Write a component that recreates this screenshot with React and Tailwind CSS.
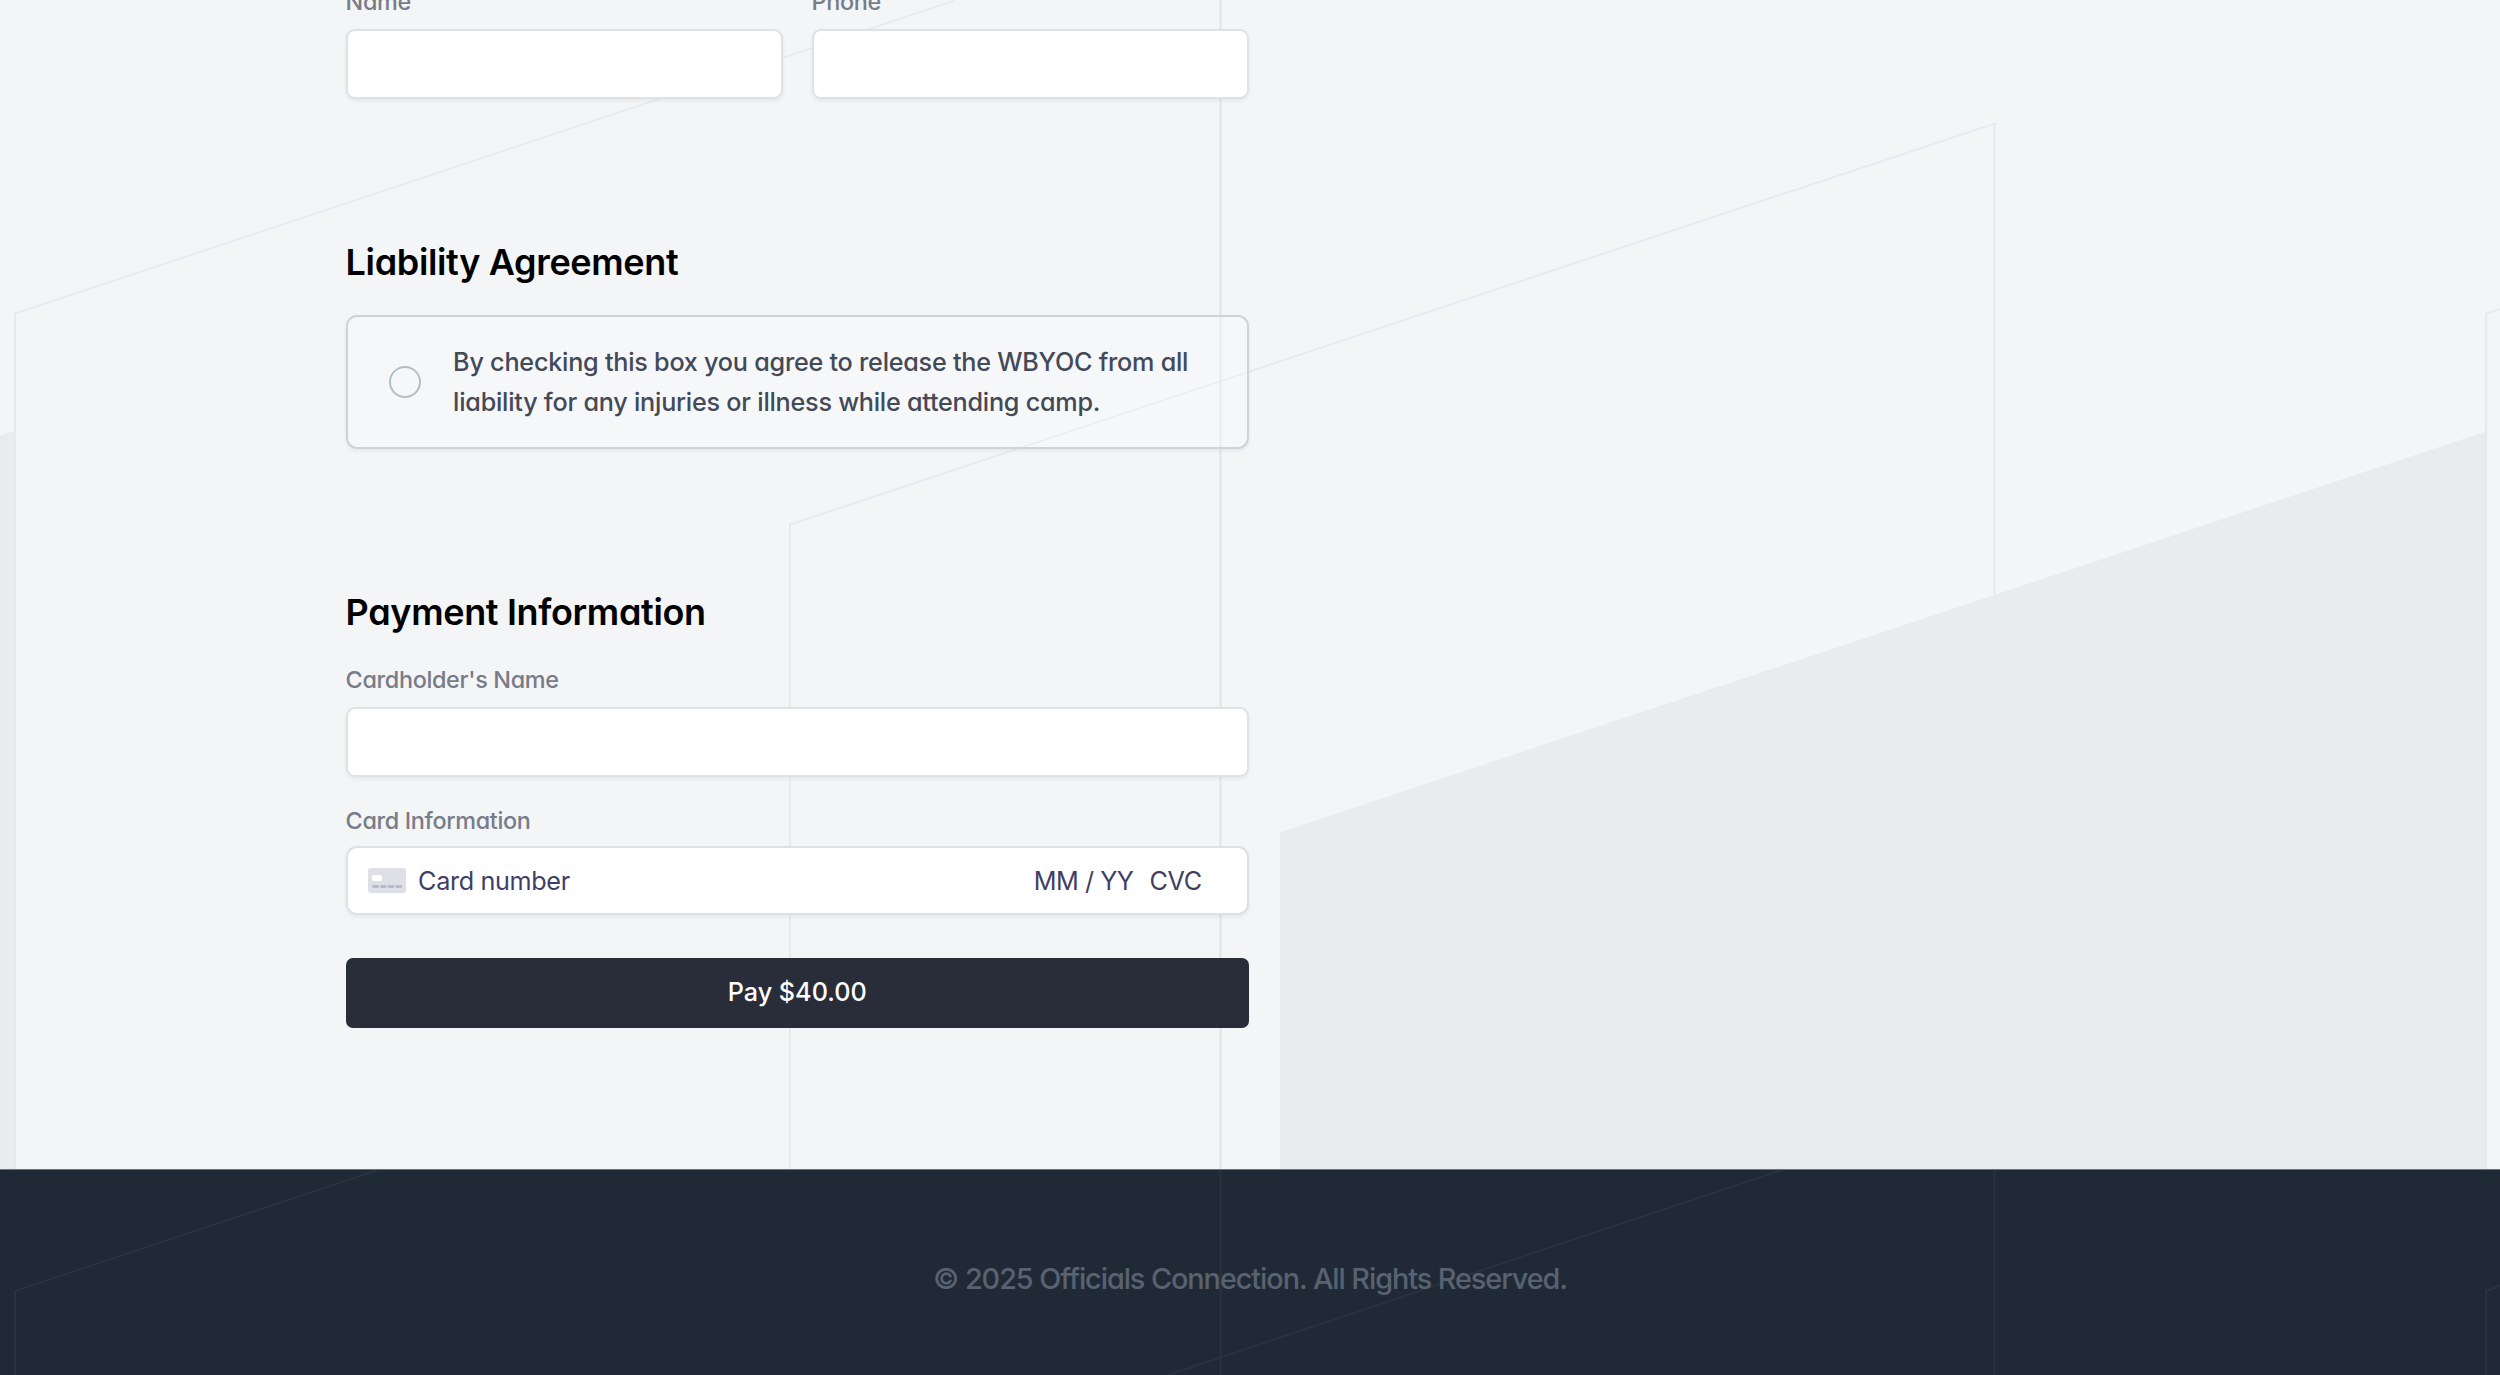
const alt = "[font-feature-settings:'cv11']";

const Backdrop = () => (
  <svg className="absolute inset-0 -z-10" width="2500" height="1375" viewBox="0 0 2500 1375" fill="none" aria-hidden="true">
    <path d="M1280 1169V832.500L2486 431.500V1169ZM0 1169V435.500L15 430.500V1169Z" fill="#e8ecef" />
    <g stroke="#e5e8ed" strokeWidth="2">
      <path d="M15 1169V313.500L955 0.500" strokeWidth="1.4" />
      <path d="M15 1169V313M2486 1169V313" />
      <path d="M2486 313.500L2500 309" strokeWidth="1.4" />
      <path d="M1220.500 0V1169" stroke="#e1e5ea" />
      <path d="M790 1169V524.500L1994.500 123.500V1169" strokeWidth="1.6" />
    </g>
  </svg>
);

const FooterLines = () => (
  <svg className="absolute inset-0 -z-10" width="2500" height="206" viewBox="0 1169 2500 206" fill="none" aria-hidden="true">
    <g stroke="#29323e" strokeWidth="2">
      <path d="M15 1375V1290L378 1169" />
      <path d="M1220.500 1169V1375M1994.500 1169V1375" />
      <path d="M1165 1375L1782 1169" />
      <path d="M2486 1375V1290L2500 1285" />
    </g>
  </svg>
);

const Label = ({ children }) => (
  <span className="block h-7 text-[23.400px] leading-[29px] font-medium tracking-[-0.340px] text-[#777c88]">{children}</span>
);

const Input = ({ className = "" }) => (
  <input className={`block h-[70px] w-full rounded-[9px] border-2 border-[#dfe1e4] bg-white px-5 shadow-[0_2px_4px_rgba(0,0,0,0.06)] outline-none ${className}`} />
);

const Heading = ({ children }) => (
  <h2 className="mt-[138px] h-[50px] text-[36px] leading-[50px] font-semibold tracking-[-0.350px] text-black">{children}</h2>
);

const CardIcon = () => (
  <svg width="38" height="25" viewBox="0 0 38 25" aria-hidden="true">
    <rect width="38" height="25" rx="3" fill="#dfdfe8" />
    <rect x="4" y="7" width="10" height="6" rx="1.500" fill="#fff" />
    <path d="M5.500 18.500h4M13.300 18.500h4M21 18.500h4M28.700 18.500h4" stroke="#b9b9ca" strokeWidth="2.800" strokeLinecap="round" />
  </svg>
);

export default function App() {
  return (
    <div className={`relative isolate flex h-[1375px] w-[2500px] flex-col overflow-hidden bg-[#f3f5f7] font-['Inter',sans-serif] ${alt}`}>
      <Backdrop />
      <main className="ml-[345.600px] w-[903.200px] flex-1">
        <div className="-mt-[13px] grid grid-cols-2 gap-[28.800px]">
          <label><Label>Name</Label><Input className="mt-[14px]" /></label>
          <label><Label>Phone</Label><Input className="mt-[14px]" /></label>
        </div>

        <Heading>Liability Agreement</Heading>
        <label className="mt-[28px] flex h-[134px] items-center rounded-[11px] border-2 border-[#ccd4d9] bg-white/25 pl-[41.500px] shadow-[0_2px_4px_rgba(0,0,0,0.06)]">
          <span className="size-8 shrink-0 rounded-full border-2 border-[#b3bec5]" />
          <span className="ml-[32px] text-[25.200px] leading-[40.500px] font-medium tracking-[-0.240px] whitespace-nowrap text-[#434957]">
            By checking this box you agree to release the WBYOC from all
            <br />
            liability for any injuries or illness while attending camp.
          </span>
        </label>

        <Heading>Payment Information</Heading>
        <label className="mt-[28px] block"><Label>Cardholder's Name</Label><Input className="mt-[14px]" /></label>
        <div className="mt-[29px]">
          <Label>Card Information</Label>
          <div className="mt-[12px] flex h-[69px] items-center rounded-[11px] border-2 border-[#dfe0e5] bg-white pl-5 text-[25.200px] tracking-[-0.350px] text-[#403e66] shadow-[0_2px_4px_rgba(0,0,0,0.06)] [font-feature-settings:normal]">
            <CardIcon />
            <span className="ml-[12.500px] pt-[2px]">Card number</span>
            <span className="ml-auto pt-[2px] tracking-[-0.450px]">MM / YY</span>
            <span className="mr-[45px] ml-[16px] pt-[2px]">CVC</span>
          </div>
        </div>
        <button className="mt-[43px] block h-[70px] w-full rounded-[7px] bg-[#282d39] text-[25.200px] font-medium text-white [font-feature-settings:normal]">Pay $40.00</button>
      </main>
      <footer className="relative isolate flex h-[206px] items-center justify-center border-t border-[#6c737d] bg-[#202a36]">
        <FooterLines />
        <p className="pt-[13px] text-[28.800px] font-medium tracking-[-1.050px] text-[#596271]">© 2025 Officials Connection. All Rights Reserved.</p>
      </footer>
    </div>
  );
}
